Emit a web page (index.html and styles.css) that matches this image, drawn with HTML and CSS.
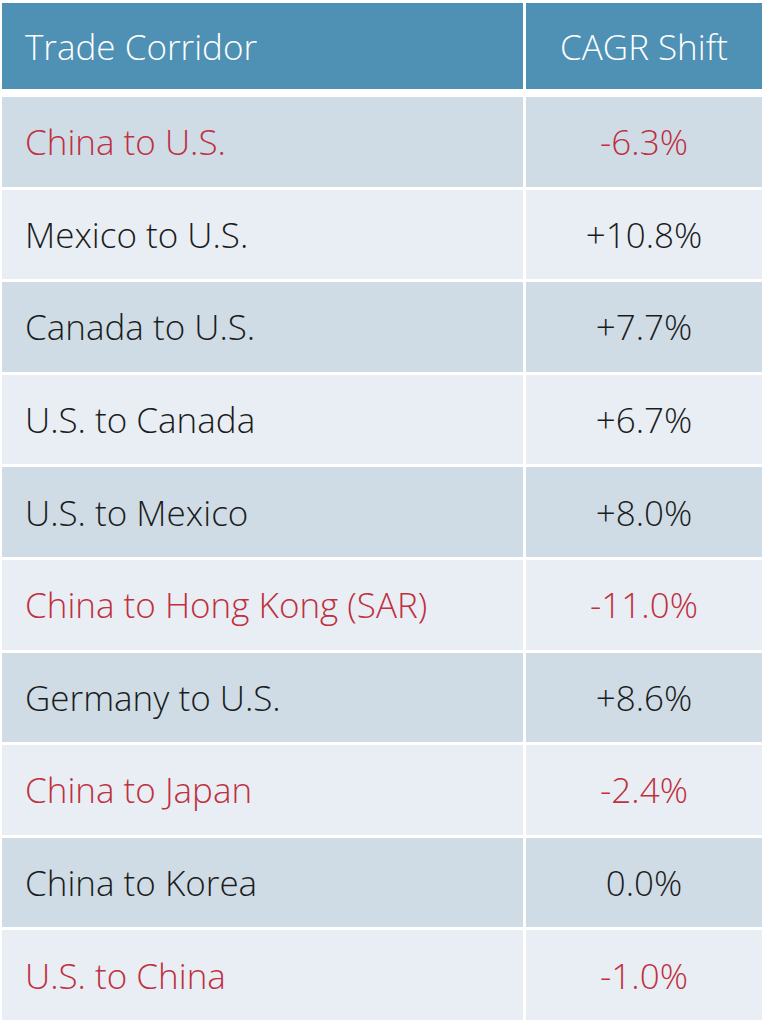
FILE: index.html
```html
<!DOCTYPE html>
<html lang="en">
<head>
<meta charset="utf-8">
<title>Trade Corridor CAGR Shift</title>
<link rel="stylesheet" href="styles.css">
</head>
<body>
<div class="table">
  <div class="cell head name">Trade Corridor</div>
  <div class="cell head val">CAGR Shift</div>

  <div class="cell dark name neg">China to U.S.</div>
  <div class="cell dark val neg">-6.3%</div>

  <div class="cell light name">Mexico to U.S.</div>
  <div class="cell light val">+10.8%</div>

  <div class="cell dark name">Canada to U.S.</div>
  <div class="cell dark val">+7.7%</div>

  <div class="cell light name">U.S. to Canada</div>
  <div class="cell light val">+6.7%</div>

  <div class="cell dark name">U.S. to Mexico</div>
  <div class="cell dark val">+8.0%</div>

  <div class="cell light name neg">China to Hong Kong (SAR)</div>
  <div class="cell light val neg">-11.0%</div>

  <div class="cell dark name">Germany to U.S.</div>
  <div class="cell dark val">+8.6%</div>

  <div class="cell light name neg">China to Japan</div>
  <div class="cell light val neg">-2.4%</div>

  <div class="cell dark name">China to Korea</div>
  <div class="cell dark val">0.0%</div>

  <div class="cell light name neg">U.S. to China</div>
  <div class="cell light val neg">-1.0%</div>
</div>
</body>
</html>
```

FILE: styles.css
```css
html, body {
  margin: 0;
  background: #ffffff;
}
body {
  padding: 3px 0 0 2px;
  font-family: "Open Sans", "Noto Sans", sans-serif;
  font-weight: 300;
  font-size: 35px;
  color: #1c1c1c;
}
.table {
  display: grid;
  grid-template-columns: 521px 236px;
  grid-template-rows: 91px repeat(10, 89.6px);
  column-gap: 3px;
  row-gap: 3px;
}
.cell {
  display: flex;
  align-items: center;
  white-space: nowrap;
}
.head {
  background: #4e91b4;
  color: #ffffff;
  height: 86px;
  align-self: start;
}
.name {
  padding-left: 23px;
}
.val {
  justify-content: center;
}
.dark { background: #cfdce6; }
.light { background: #e8eef3; }
.neg { color: #c0303f; }
```
